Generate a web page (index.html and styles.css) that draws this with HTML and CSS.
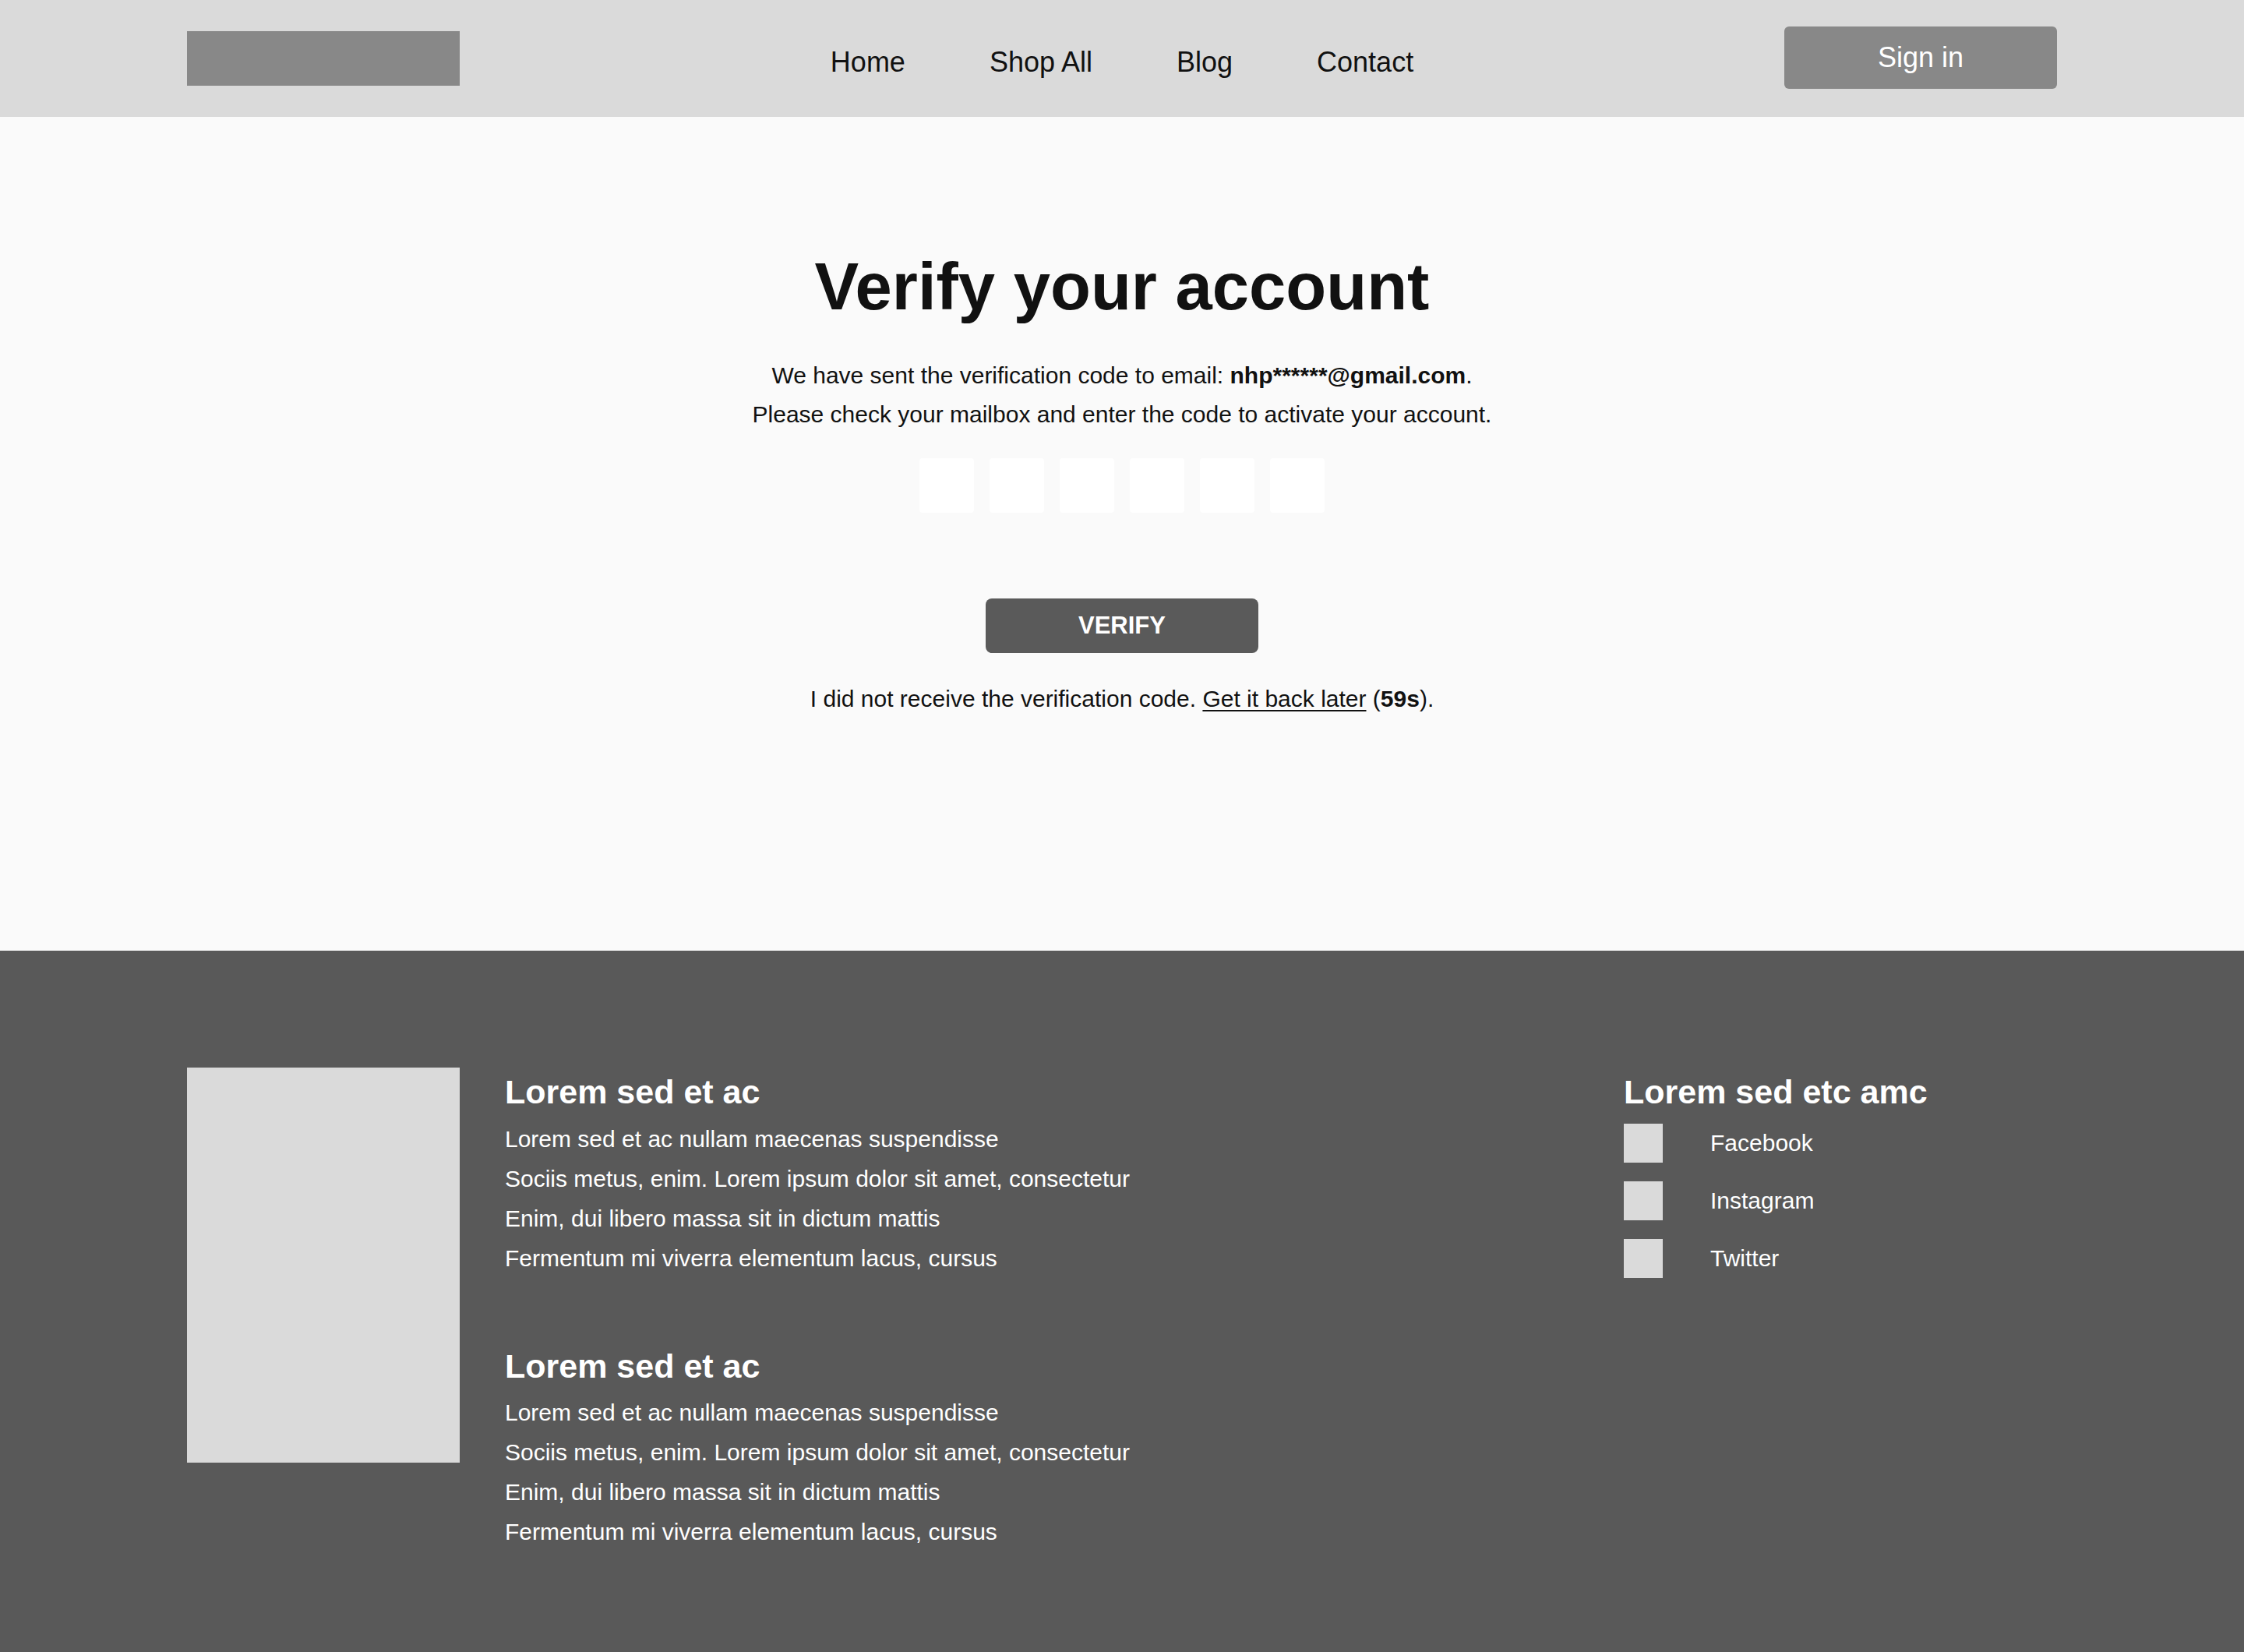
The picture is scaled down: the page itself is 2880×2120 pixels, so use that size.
FILE: index.html
```html
<!DOCTYPE html>
<html lang="en">
<head>
<meta charset="utf-8">
<title>Verify your account</title>
<link rel="stylesheet" href="styles.css">
</head>
<body>
<header class="header">
  <div class="header-inner">
    <div class="logo"></div>
    <nav class="nav">
      <a class="nav-link" href="#">Home</a>
      <a class="nav-link" href="#">Shop All</a>
      <a class="nav-link" href="#">Blog</a>
      <a class="nav-link" href="#">Contact</a>
    </nav>
    <button class="signin">Sign in</button>
  </div>
</header>
<main class="main">
  <h1 class="title">Verify your account</h1>
  <p class="desc">We have sent the verification code to email: <b>nhp******@gmail.com</b>.<br>Please check your mailbox and enter the code to activate your account.</p>
  <div class="code">
    <input class="code-box" maxlength="1">
    <input class="code-box" maxlength="1">
    <input class="code-box" maxlength="1">
    <input class="code-box" maxlength="1">
    <input class="code-box" maxlength="1">
    <input class="code-box" maxlength="1">
  </div>
  <button class="verify">VERIFY</button>
  <p class="resend">I did not receive the verification code. <a class="resend-link" href="#">Get it back later</a> (<b>59s</b>).</p>
</main>
<footer class="footer">
  <div class="footer-inner">
    <div class="footer-image"></div>
    <div class="footer-text">
      <div class="footer-block">
        <h3 class="footer-heading">Lorem sed et ac</h3>
        <p class="footer-line">Lorem sed et ac nullam maecenas suspendisse</p>
        <p class="footer-line">Sociis metus, enim. Lorem ipsum dolor sit amet, consectetur</p>
        <p class="footer-line">Enim, dui libero massa sit in dictum mattis</p>
        <p class="footer-line">Fermentum mi viverra elementum lacus, cursus</p>
      </div>
      <div class="footer-block">
        <h3 class="footer-heading">Lorem sed et ac</h3>
        <p class="footer-line">Lorem sed et ac nullam maecenas suspendisse</p>
        <p class="footer-line">Sociis metus, enim. Lorem ipsum dolor sit amet, consectetur</p>
        <p class="footer-line">Enim, dui libero massa sit in dictum mattis</p>
        <p class="footer-line">Fermentum mi viverra elementum lacus, cursus</p>
      </div>
    </div>
    <div class="footer-social">
      <h3 class="footer-heading">Lorem sed etc amc</h3>
      <ul class="social-list">
        <li class="social-item"><span class="social-icon"></span><span class="social-label">Facebook</span></li>
        <li class="social-item"><span class="social-icon"></span><span class="social-label">Instagram</span></li>
        <li class="social-item"><span class="social-icon"></span><span class="social-label">Twitter</span></li>
      </ul>
    </div>
  </div>
</footer>
</body>
</html>
```
FILE: styles.css
```css
* { box-sizing: border-box; }
html, body { margin: 0; padding: 0; }
body {
  font-family: "Liberation Sans", Arial, sans-serif;
  color: #111;
  background: #595959;
}
.header {
  background: #dadada;
  height: 150px;
}
.header-inner {
  width: 2400px;
  margin: 0 auto;
  height: 100%;
  display: flex;
  align-items: center;
  justify-content: space-between;
}
.logo {
  width: 350px;
  height: 70px;
  background: #888888;
}
.nav {
  display: flex;
  gap: 108px;
  margin-top: 9px;
}
.nav-link {
  font-size: 36px;
  line-height: 1.2;
  color: #111;
  text-decoration: none;
}
.signin {
  width: 350px;
  height: 80px;
  margin-top: -3px;
  border: none;
  border-radius: 6px;
  background: #888888;
  color: #fff;
  font-family: inherit;
  font-size: 36px;
  padding: 0;
}
.main {
  background: #fafafa;
  height: 1070px;
  padding-top: 167px;
  display: flex;
  flex-direction: column;
  align-items: center;
}
.title {
  margin: 0;
  font-size: 85px;
  line-height: 1.2;
  font-weight: 700;
  color: #111;
}
.desc {
  margin: 38px 0 0;
  font-size: 30px;
  line-height: 50px;
  text-align: center;
}
.code {
  display: flex;
  gap: 20px;
  margin-top: 31px;
}
.code-box {
  width: 70px;
  height: 70px;
  border: none;
  border-radius: 4px;
  background: #ffffff;
  padding: 0;
  font-size: 36px;
  text-align: center;
  outline: none;
}
.verify {
  margin-top: 110px;
  width: 350px;
  height: 70px;
  border: none;
  border-radius: 8px;
  background: #5a5a5a;
  color: #fff;
  font-family: inherit;
  font-weight: 700;
  font-size: 31px;
  padding: 0;
}
.resend {
  margin: 39px 0 0;
  font-size: 30px;
  line-height: 40px;
}
.resend-link {
  color: #111;
  text-decoration: underline;
  text-underline-offset: 4px;
  text-decoration-thickness: 2px;
}
.footer {
  background: #595959;
  height: 900px;
  padding-top: 150px;
  color: #fff;
}
.footer-inner {
  width: 2400px;
  margin: 0 auto;
  display: grid;
  grid-template-columns: 350px 1fr 556px;
  column-gap: 58px;
  align-items: start;
}
.footer-image {
  width: 350px;
  height: 507px;
  background: #dadada;
}
.footer-text {
  padding-top: 6px;
  display: flex;
  flex-direction: column;
  gap: 88px;
}
.footer-heading {
  margin: 0;
  font-size: 43px;
  line-height: 1.2;
  font-weight: 700;
  color: #fff;
}
.footer-block .footer-heading {
  margin-bottom: 8px;
}
.footer-line {
  margin: 0;
  font-size: 30px;
  line-height: 51px;
  color: #fff;
}
.footer-social {
  padding-top: 6px;
}
.social-list {
  list-style: none;
  margin: 14px 0 0;
  padding: 0;
  display: flex;
  flex-direction: column;
  gap: 24px;
}
.social-item {
  display: flex;
  align-items: center;
}
.social-icon {
  width: 50px;
  height: 50px;
  background: #dadada;
  flex: none;
}
.social-label {
  margin-left: 61px;
  font-size: 30px;
  line-height: 40px;
  color: #fff;
}
```
